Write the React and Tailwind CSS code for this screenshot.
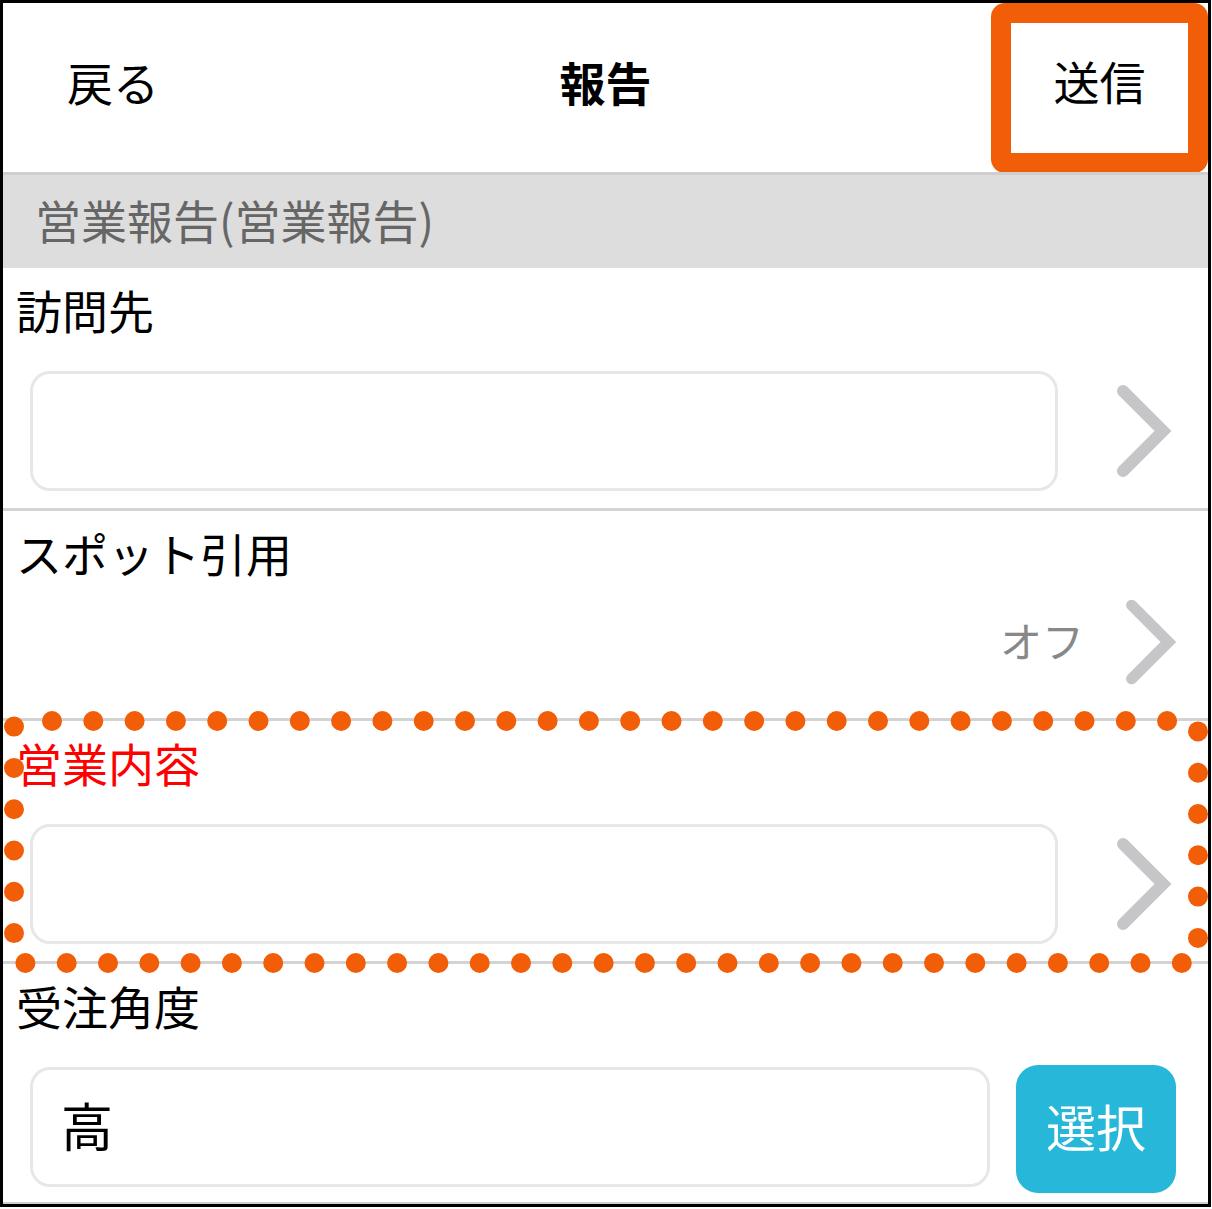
import React from "react";

function Chevron({ className = "" }) {
  return (
    <svg viewBox="0 0 60 100" className={className} fill="none">
      <path d="M10 10 L50 50 L10 90" stroke="#c6c6c9" strokeWidth="12" strokeLinecap="round" strokeLinejoin="miter" />
    </svg>
  );
}

function Field({ label, red }) {
  return (
    <div className="pt-[18px] pb-[17px]">
      <div className={`pl-[13px] text-[46px] leading-none ${red ? "text-[#ff0000]" : "text-black"}`}>{label}</div>
      <div className="mt-[39px] flex items-center">
        <div className="ml-[27px] h-[120px] w-[1028px] rounded-[20px] border-[3px] border-[#e7e7e7] bg-white" />
        <div className="flex flex-1 justify-center pl-[20px]">
          <Chevron className="h-[100px] w-[60px]" />
        </div>
      </div>
    </div>
  );
}

export default function App() {
  return (
    <div className="w-[1212px] h-[1209px] bg-white font-['Noto_Sans_CJK_JP',sans-serif]">
      <div className="w-[1211px] h-[1207px] border-[3px] border-black flex flex-col overflow-hidden">
        {/* header */}
        <div className="grid h-[169px] grid-cols-[1fr_auto_1fr] items-center">
          <div className="mb-[14px] pl-[64px] text-[46px] leading-none text-black">戻る</div>
          <div className="mb-[14px] text-[46px] font-bold leading-none text-black">報告</div>
          <div className="flex h-full justify-end">
            <div className="flex h-[170px] w-[217px] items-center justify-center rounded-[14px] border-[20px] border-[#f25d07] bg-white pb-[16px] text-[46px] leading-none text-black">
              送信
            </div>
          </div>
        </div>
        <div className="h-[3px] bg-[#cfcfcf]" />

        {/* group title */}
        <div className="flex h-[93px] items-center bg-[#dddddd] pb-[6px] pl-[32px] text-[46px] leading-none text-[#666666]">
          営業報告(営業報告)
        </div>

        <Field label="訪問先" />
        <div className="h-[3px] bg-[#d3d3d3]" />

        {/* spot */}
        <div className="h-[207px] pt-[18px]">
          <div className="pl-[13px] text-[46px] leading-none text-black">スポット引用</div>
          <div className="mt-[23px] flex h-[88px] items-center justify-end pr-[30px]">
            <span className="mr-[38px] mb-[4px] text-[42px] leading-none text-[#888888]">オフ</span>
            <Chevron className="h-[92px] w-[56px]" />
          </div>
        </div>

        {/* highlighted section */}
        <div className="relative">
          <div className="h-[3px] bg-[#d3d3d3]" />
          <Field label="営業内容" red />
          <div className="h-[3px] bg-[#d3d3d3]" />
          <svg
            className="pointer-events-none absolute left-[-3px] top-[-18px]"
            width="1212"
            height="280"
            viewBox="0 700 1212 280"
          >
            <rect
              x="14"
              y="721"
              width="1184"
              height="242"
              fill="none"
              stroke="#f25d07"
              strokeWidth="20"
              strokeLinecap="round"
              strokeDasharray="0 41.3"
              strokeDashoffset="3.3"
            />
          </svg>
        </div>

        {/* order */}
        <div className="flex-1 pt-[18px]">
          <div className="pl-[13px] text-[46px] leading-none text-black">受注角度</div>
          <div className="mt-[37px] flex items-start">
            <div className="ml-[27px] mt-[2px] flex h-[120px] w-[960px] items-center rounded-[20px] border-[3px] border-[#e7e7e7] pb-[4px] pl-[28px] text-[52px] leading-none text-black">
              高
            </div>
            <div className="ml-[26px] flex h-[128px] w-[160px] items-center justify-center rounded-[22px] bg-[#26b7d9] pb-[8px] text-[50px] leading-none text-white">
              選択
            </div>
          </div>
        </div>
        <div className="h-[2px] bg-[#cfcfcf]" />
      </div>
    </div>
  );
}
